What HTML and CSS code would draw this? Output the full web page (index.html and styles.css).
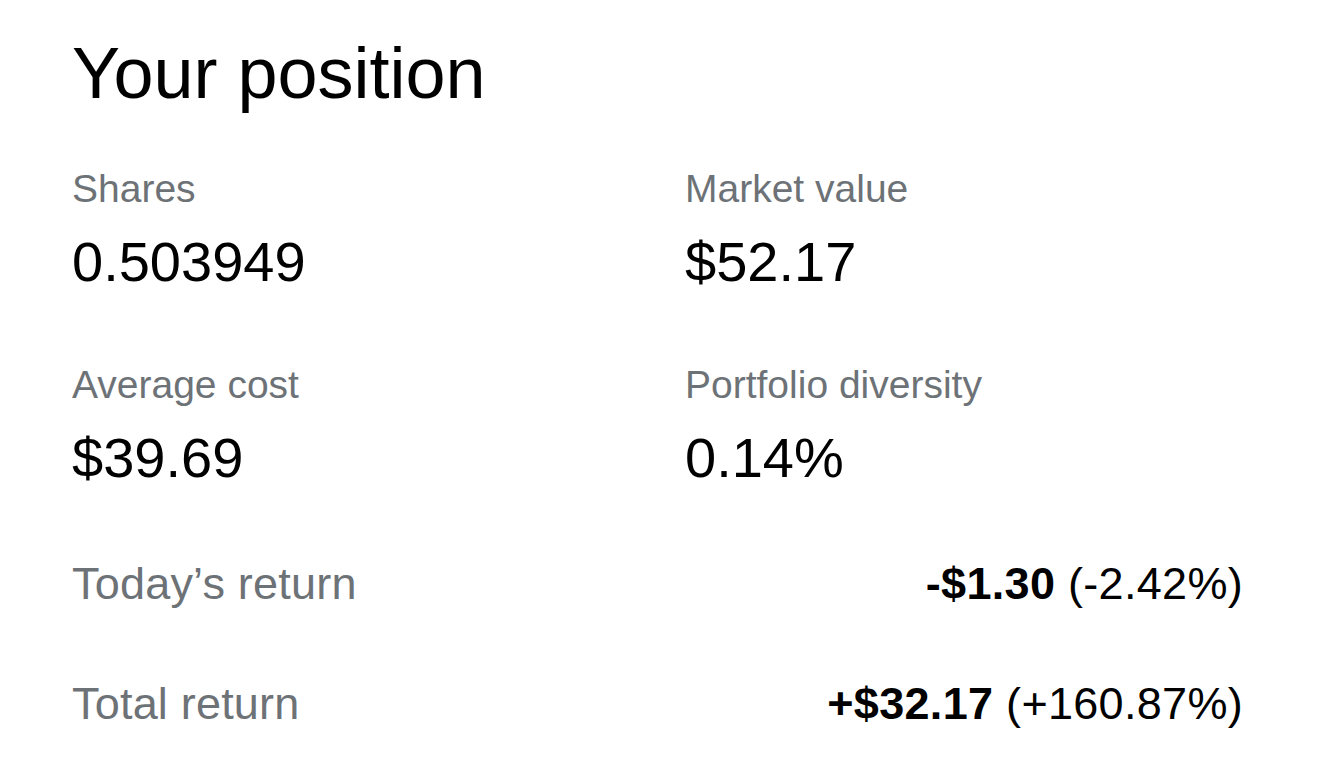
FILE: index.html
```html
<!DOCTYPE html>
<html lang="en">
<head>
<meta charset="utf-8">
<title>Your position</title>
<link rel="stylesheet" href="styles.css">
</head>
<body>
<main class="position">
  <h1 class="title">Your position</h1>
  <div class="stats">
    <div class="stat">
      <div class="label">Shares</div>
      <div class="value">0.503949</div>
    </div>
    <div class="stat">
      <div class="label">Market value</div>
      <div class="value">$52.17</div>
    </div>
    <div class="stat">
      <div class="label">Average cost</div>
      <div class="value">$39.69</div>
    </div>
    <div class="stat">
      <div class="label">Portfolio diversity</div>
      <div class="value">0.14%</div>
    </div>
  </div>
  <div class="returns">
    <div class="return-row">
      <span class="return-label">Today’s return</span>
      <span class="return-value"><b>-$1.30</b> (-2.42%)</span>
    </div>
    <div class="return-row">
      <span class="return-label">Total return</span>
      <span class="return-value"><b>+$32.17</b> (+160.87%)</span>
    </div>
  </div>
</main>
</body>
</html>
```
FILE: styles.css
```css
html, body {
  margin: 0;
  padding: 0;
  background: #ffffff;
}
body {
  font-family: "Liberation Sans", Arial, sans-serif;
  color: #000000;
}
.position {
  padding: 37px 76px 0 72px;
}
.title {
  margin: 0;
  font-size: 72px;
  line-height: 72px;
  font-weight: 400;
}
.stats {
  display: grid;
  grid-template-columns: 613px 1fr;
  row-gap: 75px;
  margin-top: 60px;
}
.label {
  font-size: 39px;
  line-height: 40px;
  color: #6d7277;
}
.value {
  margin-top: 25px;
  font-size: 56px;
  line-height: 56px;
}
.returns {
  margin-top: 68px;
  display: flex;
  flex-direction: column;
  gap: 60px;
}
.return-row {
  display: flex;
  justify-content: space-between;
  align-items: baseline;
  height: 60px;
  line-height: 60px;
}
.return-label {
  font-size: 45px;
  letter-spacing: 0.2px;
  color: #6d7277;
}
.return-value {
  font-size: 45px;
  letter-spacing: 0.3px;
}
.return-value b {
  font-weight: 700;
}
```
